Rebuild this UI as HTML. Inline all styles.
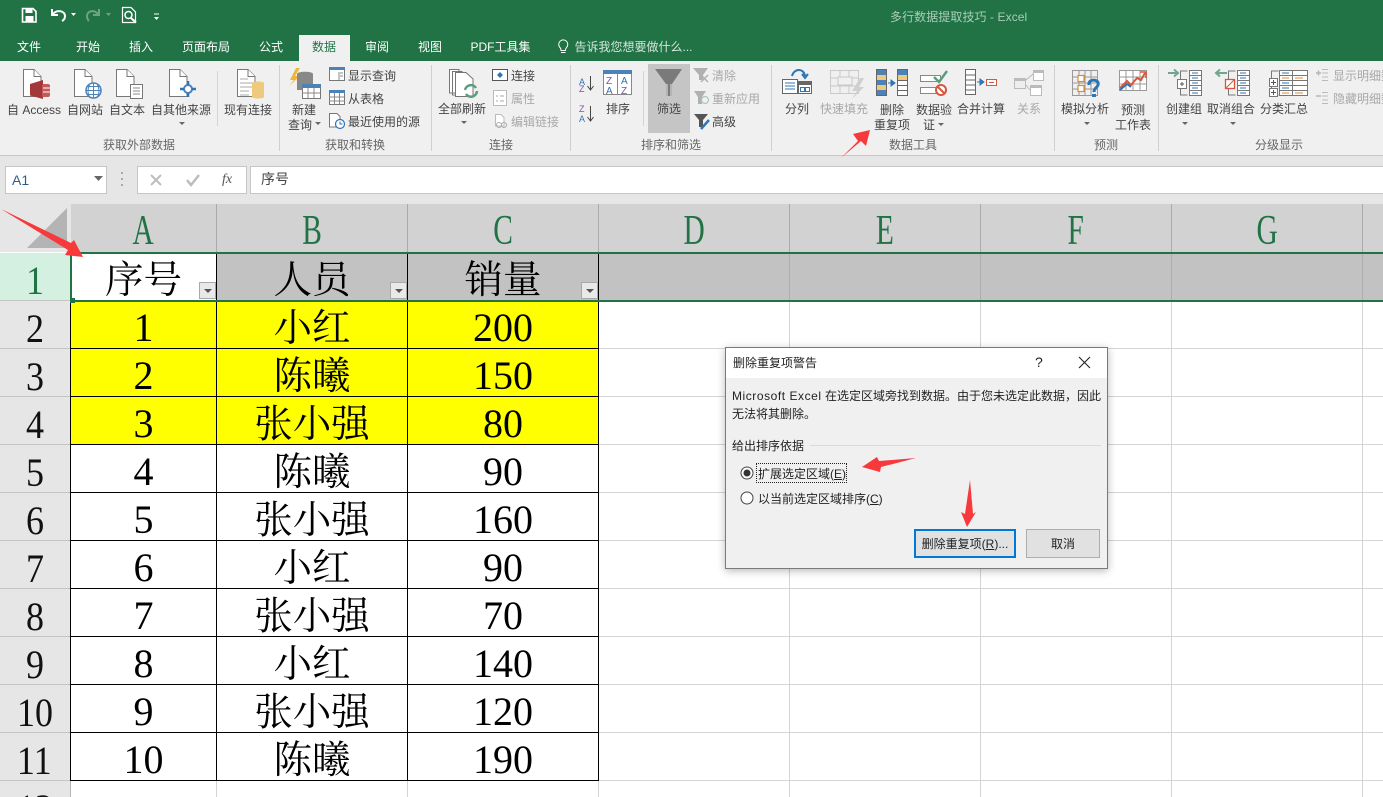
<!DOCTYPE html>
<html lang="zh"><head><meta charset="utf-8"><title>多行数据提取技巧 - Excel</title>
<style>
html,body{margin:0;padding:0;height:797px;overflow:hidden}
body{width:1383px;position:relative;background:#fff;font-family:"Liberation Sans","Noto Sans CJK SC",sans-serif;font-size:12px;color:#444}
div,span{position:absolute;white-space:nowrap}
.t{line-height:16px;height:16px;margin-top:1px}
.c{transform:translateX(-50%)}
.d{color:#a8a8a8}
.tab{top:39px;color:#fff;line-height:16px;transform:translateX(-50%)}
.sep{width:1px;background:#d4d4d4}
.ch{top:204px;height:48px;text-align:center;font:42px/54px "Liberation Serif",serif;color:#217346;background:#d2d2d2;border-right:1px solid #ababab;box-sizing:border-box;overflow:hidden}
.ch b{display:inline-block;font-weight:400;transform:scaleX(.7)}
.rh{left:0;width:71px;height:48px;background:#e6e6e6;border-bottom:1px solid #c4c4c4;box-sizing:border-box;text-align:center;font:40px/55px "Liberation Serif",serif;color:#111;overflow:hidden}
.rh b{display:inline-block;font-weight:400;transform:scaleX(.9);margin-right:2px}
.cell{height:48px;text-align:center;font:40px/56px "Liberation Serif","Noto Serif CJK SC",serif;color:#000;font-weight:400}
.z{font-size:38.500px;line-height:59px}
.h{position:absolute;background:#d4d4d4;height:1px;left:598px;right:0}
.v{position:absolute;background:#d4d4d4;width:1px;top:300px;bottom:0}
.bh{position:absolute;background:#000;height:1px;left:71px;width:528px}
.bv{position:absolute;background:#000;width:1px;top:253px;height:528px}
.fb{width:17px;height:17px;top:282px;box-sizing:border-box;border:1px solid #a9a9a9;background:#e9e9e9}
.fb:after{content:"";position:absolute;left:4px;top:6px;border:4px solid transparent;border-top:4px solid #555;border-bottom:0}
.dt{color:#222}
.la{position:static;letter-spacing:.55px}
</style></head><body>

<div style="left:0;top:0;width:1383px;height:61px;background:#217346"></div>
<div class="t" style="left:890px;top:8px;color:#a9cdb8;letter-spacing:.08px">多行数据提取技巧 - Excel</div>
<div style="left:299px;top:35px;width:51px;height:26px;background:#f0f0f0"></div>
<span class="tab" style="left:29px">文件</span>
<span class="tab" style="left:88px">开始</span>
<span class="tab" style="left:141px">插入</span>
<span class="tab" style="left:206px">页面布局</span>
<span class="tab" style="left:271px">公式</span>
<span class="tab" style="left:324px;color:#217346">数据</span>
<span class="tab" style="left:377px">审阅</span>
<span class="tab" style="left:430px">视图</span>
<span class="tab" style="left:500.500px">PDF工具集</span>
<span class="tab" style="left:633.500px;color:#d3e6da">告诉我您想要做什么...</span>

<div style="left:0;top:61px;width:1383px;height:94px;background:#f0f0f0;border-bottom:1px solid #c8c8c8"></div>
<div class="sep" style="left:217px;top:71px;height:55px"></div>
<div class="sep" style="left:279px;top:65px;height:86px;background:#cfcfcf"></div>
<div class="sep" style="left:431px;top:65px;height:86px;background:#cfcfcf"></div>
<div class="sep" style="left:570px;top:65px;height:86px;background:#cfcfcf"></div>
<div class="sep" style="left:643px;top:71px;height:55px"></div>
<div class="sep" style="left:771px;top:65px;height:86px;background:#cfcfcf"></div>
<div class="sep" style="left:1054px;top:65px;height:86px;background:#cfcfcf"></div>
<div class="sep" style="left:1158px;top:65px;height:86px;background:#cfcfcf"></div>
<div style="left:648px;top:64px;width:42px;height:69px;background:#c5c5c5"></div>

<span class="t c" style="left:34px;top:101px">自 Access</span>
<span class="t c" style="left:85px;top:101px">自网站</span>
<span class="t c" style="left:127px;top:101px">自文本</span>
<span class="t c" style="left:181px;top:101px">自其他来源</span>
<span class="t c" style="left:248px;top:101px">现有连接</span>
<span class="t c" style="left:304px;top:101px">新建</span>
<span class="t c" style="left:300px;top:116px">查询</span>
<span class="t" style="left:348px;top:67px">显示查询</span>
<span class="t" style="left:348px;top:90px">从表格</span>
<span class="t" style="left:348px;top:113px">最近使用的源</span>
<span class="t c" style="left:462px;top:100px">全部刷新</span>
<span class="t" style="left:511px;top:67px">连接</span>
<span class="t d" style="left:511px;top:90px">属性</span>
<span class="t d" style="left:511px;top:113px">编辑链接</span>
<span class="t c" style="left:618px;top:100px">排序</span>
<span class="t c" style="left:669px;top:100px">筛选</span>
<span class="t d" style="left:712px;top:67px">清除</span>
<span class="t d" style="left:712px;top:90px">重新应用</span>
<span class="t" style="left:712px;top:113px">高级</span>
<span class="t c" style="left:797px;top:100px">分列</span>
<span class="t c d" style="left:844px;top:100px">快速填充</span>
<span class="t c" style="left:892px;top:101px">删除</span>
<span class="t c" style="left:892px;top:116px">重复项</span>
<span class="t c" style="left:934px;top:101px">数据验</span>
<span class="t c" style="left:929px;top:116px">证</span>
<span class="t c" style="left:981px;top:100px">合并计算</span>
<span class="t c d" style="left:1029px;top:100px">关系</span>
<span class="t c" style="left:1085px;top:100px">模拟分析</span>
<span class="t c" style="left:1133px;top:101px">预测</span>
<span class="t c" style="left:1133px;top:116px">工作表</span>
<span class="t c" style="left:1184px;top:100px">创建组</span>
<span class="t c" style="left:1231px;top:100px">取消组合</span>
<span class="t c" style="left:1284px;top:100px">分类汇总</span>
<span class="t d" style="left:1333px;top:67px">显示明细数据</span>
<span class="t d" style="left:1333px;top:90px">隐藏明细数据</span>
<span class="t c" style="left:139px;top:136px;color:#666">获取外部数据</span>
<span class="t c" style="left:355px;top:136px;color:#666">获取和转换</span>
<span class="t c" style="left:501px;top:136px;color:#666">连接</span>
<span class="t c" style="left:671px;top:136px;color:#666">排序和筛选</span>
<span class="t c" style="left:913px;top:136px;color:#666">数据工具</span>
<span class="t c" style="left:1106px;top:136px;color:#666">预测</span>
<span class="t c" style="left:1279px;top:136px;color:#666">分级显示</span>

<!-- formula bar -->
<div style="left:0;top:156px;width:1383px;height:48px;background:#e6e6e6"></div>
<div style="left:5px;top:166px;width:102px;height:28px;background:#fff;border:1px solid #c6c6c6;box-sizing:border-box;font-size:14px;line-height:26px;padding-left:6px;color:#2f5d8a">A1</div>
<div style="left:137px;top:166px;width:110px;height:28px;background:#fff;border:1px solid #c6c6c6;box-sizing:border-box"></div>
<div style="left:250px;top:166px;width:1140px;height:28px;background:#fff;border:1px solid #c6c6c6;box-sizing:border-box;font-size:14px;line-height:25px;padding-left:10px;color:#444">序号</div>
<span style="left:222px;top:171px;font:italic 14px/18px 'Liberation Serif',serif;color:#555">fx</span>

<!-- sheet -->
<div style="left:0;top:204px;width:71px;height:48px;background:#e6e6e6"></div>
<div class="ch" style="left:71px;width:146px"><b>A</b></div>
<div class="ch" style="left:217px;width:191px"><b>B</b></div>
<div class="ch" style="left:408px;width:191px"><b>C</b></div>
<div class="ch" style="left:599px;width:191px"><b>D</b></div>
<div class="ch" style="left:790px;width:191px"><b>E</b></div>
<div class="ch" style="left:981px;width:191px"><b>F</b></div>
<div class="ch" style="left:1172px;width:191px"><b>G</b></div>
<div class="ch" style="left:1363px;width:20px;border:0"></div>

<div class="rh" style="top:253px;background:#d3f0e0;color:#217346"><b>1</b></div>
<div class="rh" style="top:301px"><b>2</b></div>
<div class="rh" style="top:349px"><b>3</b></div>
<div class="rh" style="top:397px"><b>4</b></div>
<div class="rh" style="top:445px"><b>5</b></div>
<div class="rh" style="top:493px"><b>6</b></div>
<div class="rh" style="top:541px"><b>7</b></div>
<div class="rh" style="top:589px"><b>8</b></div>
<div class="rh" style="top:637px"><b>9</b></div>
<div class="rh" style="top:685px"><b>10</b></div>
<div class="rh" style="top:733px"><b>11</b></div>
<div class="rh" style="top:781px;height:16px;border:0"><b>12</b></div>
<div style="left:70px;top:253px;width:1px;height:544px;background:#b5b5b5"></div>

<div style="left:217px;top:253px;width:1166px;height:47px;background:#c2c2c2"></div>
<div style="left:71px;top:301px;width:527px;height:143px;background:#ff0"></div>

<div class="h" style="top:348px"></div><div class="h" style="top:396px"></div><div class="h" style="top:444px"></div><div class="h" style="top:492px"></div><div class="h" style="top:540px"></div><div class="h" style="top:588px"></div><div class="h" style="top:636px"></div><div class="h" style="top:684px"></div><div class="h" style="top:732px"></div><div class="h" style="top:780px"></div>
<div class="v" style="left:789px"></div><div class="v" style="left:980px"></div><div class="v" style="left:1171px"></div><div class="v" style="left:1362px"></div>
<div class="v" style="left:216px;top:781px"></div><div class="v" style="left:407px;top:781px"></div><div class="v" style="left:598px;top:781px"></div>
<div style="left:789px;top:253px;width:1px;height:47px;background:#aeaeae"></div><div style="left:980px;top:253px;width:1px;height:47px;background:#aeaeae"></div><div style="left:1171px;top:253px;width:1px;height:47px;background:#aeaeae"></div><div style="left:1362px;top:253px;width:1px;height:47px;background:#aeaeae"></div>

<div class="bh" style="top:348px"></div><div class="bh" style="top:396px"></div><div class="bh" style="top:444px"></div><div class="bh" style="top:492px"></div><div class="bh" style="top:540px"></div><div class="bh" style="top:588px"></div><div class="bh" style="top:636px"></div><div class="bh" style="top:684px"></div><div class="bh" style="top:732px"></div><div class="bh" style="top:780px"></div>
<div class="bv" style="left:216px"></div><div class="bv" style="left:407px"></div><div class="bv" style="left:598px"></div>
<div class="bv" style="left:70px;top:301px;height:480px"></div>

<div class="cell z" style="left:71px;top:252px;width:145px">序号</div><div class="cell z" style="left:217px;top:252px;width:190px">人员</div><div class="cell z" style="left:408px;top:252px;width:190px">销量</div>
<div class="cell" style="left:71px;top:300px;width:145px">1</div><div class="cell z" style="left:217px;top:300px;width:190px">小红</div><div class="cell" style="left:408px;top:300px;width:190px">200</div>
<div class="cell" style="left:71px;top:348px;width:145px">2</div><div class="cell z" style="left:217px;top:348px;width:190px">陈曦</div><div class="cell" style="left:408px;top:348px;width:190px">150</div>
<div class="cell" style="left:71px;top:396px;width:145px">3</div><div class="cell z" style="left:217px;top:396px;width:190px">张小强</div><div class="cell" style="left:408px;top:396px;width:190px">80</div>
<div class="cell" style="left:71px;top:444px;width:145px">4</div><div class="cell z" style="left:217px;top:444px;width:190px">陈曦</div><div class="cell" style="left:408px;top:444px;width:190px">90</div>
<div class="cell" style="left:71px;top:492px;width:145px">5</div><div class="cell z" style="left:217px;top:492px;width:190px">张小强</div><div class="cell" style="left:408px;top:492px;width:190px">160</div>
<div class="cell" style="left:71px;top:540px;width:145px">6</div><div class="cell z" style="left:217px;top:540px;width:190px">小红</div><div class="cell" style="left:408px;top:540px;width:190px">90</div>
<div class="cell" style="left:71px;top:588px;width:145px">7</div><div class="cell z" style="left:217px;top:588px;width:190px">张小强</div><div class="cell" style="left:408px;top:588px;width:190px">70</div>
<div class="cell" style="left:71px;top:636px;width:145px">8</div><div class="cell z" style="left:217px;top:636px;width:190px">小红</div><div class="cell" style="left:408px;top:636px;width:190px">140</div>
<div class="cell" style="left:71px;top:684px;width:145px">9</div><div class="cell z" style="left:217px;top:684px;width:190px">张小强</div><div class="cell" style="left:408px;top:684px;width:190px">120</div>
<div class="cell" style="left:71px;top:732px;width:145px">10</div><div class="cell z" style="left:217px;top:732px;width:190px">陈曦</div><div class="cell" style="left:408px;top:732px;width:190px">190</div>

<div class="fb" style="left:199px"></div><div class="fb" style="left:390px"></div><div class="fb" style="left:581px"></div>

<!-- selection -->
<div style="left:70px;top:252px;width:1313px;height:2px;background:#217346"></div>
<div style="left:70px;top:300px;width:1313px;height:2px;background:#217346"></div>
<div style="left:70px;top:252px;width:2px;height:50px;background:#217346"></div>
<div style="left:70px;top:298px;width:5px;height:5px;background:#217346"></div>

<!-- dialog -->
<div style="left:725px;top:347px;width:383px;height:222px;background:#f0f0f0;border:1px solid #7a7a7a;box-sizing:border-box;box-shadow:0 2px 8px rgba(0,0,0,.28)"></div>
<div style="left:726px;top:348px;width:381px;height:30px;background:#fff"></div>
<span class="t dt" style="left:733px;top:354px">删除重复项警告</span>
<span style="left:1035px;top:354px;font-size:14px;line-height:16px;color:#222">?</span>
<span class="t dt" style="left:732px;top:387px"><span class="la">Microsoft Excel</span> 在选定区域旁找到数据。由于您未选定此数据，因此</span>
<span class="t dt" style="left:732px;top:405px">无法将其删除。</span>
<span class="t dt" style="left:732px;top:437px">给出排序依据</span>
<div style="left:810px;top:445px;width:291px;height:1px;background:#d9d9d9"></div>
<div style="left:756px;top:463px;width:91px;height:20px;box-sizing:border-box;border:1px dotted #222"></div>
<span class="t dt" style="left:758px;top:465px">扩展选定区域(<u>E</u>)</span>
<span class="t dt" style="left:758px;top:490px">以当前选定区域排序(<u>C</u>)</span>
<div style="left:914px;top:529px;width:102px;height:29px;box-sizing:border-box;border:2px solid #0078d7;background:#e1e1e1;text-align:center;line-height:26px;color:#222">删除重复项(<u>R</u>)...</div>
<div style="left:1026px;top:529px;width:74px;height:29px;box-sizing:border-box;border:1px solid #adadad;background:#e1e1e1;text-align:center;line-height:28px;color:#222">取消</div>

<svg width="1383" height="797" viewBox="0 0 1383 797" style="position:absolute;left:0;top:0" fill="none">
<defs>
<path id="pg" d="M.5.5H11L18 7.5V27.5H.5Z" fill="#fff" stroke="#777"/>
<path id="pf" d="M11 .5V7.5H18" stroke="#777" fill="#fff"/>
</defs>
<!-- QAT -->
<path d="M22.5 8.5H33L36 11.5V22H22.5Z" stroke="#fff" stroke-width="1.6"/><rect x="25.5" y="9" width="7" height="4" fill="#fff"/><rect x="25.5" y="16" width="8" height="5.5" fill="#fff"/>
<path d="M52 9V15H58M53 14C57 9 65 11 65 16C65 18 64 20 62 21" stroke="#fff" stroke-width="2"/>
<path d="M71 13H76L73.500 16Z" fill="#fff"/>
<path d="M99 9V15H93M98 14C94 9 87 11 87 16C87 18 88 20 89 21" stroke="#6fa386" stroke-width="2"/>
<path d="M106 13H111L108.500 16Z" fill="#6fa386"/>
<path d="M122.500 7.500H131L135.500 12V22.500H122.500Z" stroke="#fff" stroke-width="1.2"/><circle cx="128.500" cy="15" r="3.500" stroke="#fff" stroke-width="1.500"/><path d="M131 18L136 22.500" stroke="#fff" stroke-width="2"/>
<path d="M154 14H159" stroke="#fff"/><path d="M154 17H159L156.500 20Z" fill="#fff"/>
<!-- bulb -->
<path d="M560 47.500A4.500 4.500 0 1 1 566.500 47.500C565.500 48.500 565.500 49.500 565.500 50.500H561C561 49.500 561 48.500 560 47.500ZM561 52.500H565.500" stroke="#fff"/>

<!-- Access -->
<use href="#pg" x="23" y="69"/><use href="#pf" x="23" y="69"/>
<path d="M30 84L43 80V99L30 95.500Z" fill="#a4373a"/><rect x="42" y="84" width="8" height="13" rx="2" fill="#c45a5a"/><path d="M43 88H50M43 92H50" stroke="#fff"/>
<!-- web -->
<use href="#pg" x="74" y="69"/><use href="#pf" x="74" y="69"/>
<circle cx="93.500" cy="90.500" r="7.500" fill="#fff" stroke="#4d82b8" stroke-width="1.500"/><path d="M86 90.500H101M87 86.500H100M87 94.500H100M93.500 83V98M89.500 85C87.500 89 87.500 93 89.500 97M97.500 85C99.500 89 99.500 93 97.500 97" stroke="#4d82b8"/>
<!-- text -->
<use href="#pg" x="116" y="69"/><use href="#pf" x="116" y="69"/>
<rect x="130.500" y="84.500" width="12" height="14" fill="#fff" stroke="#777"/><path d="M133 88H140M133 91H140M133 94H140" stroke="#888"/>
<!-- other -->
<use href="#pg" x="169" y="69"/><use href="#pf" x="169" y="69"/>
<circle cx="188" cy="89" r="4" stroke="#4d82b8" stroke-width="2" fill="#fff"/><path d="M188 81V85M188 93V97M180 89H184M192 89H196" stroke="#2e75b6" stroke-width="2.500"/>
<path d="M179 122H185L182 125Z" fill="#666"/>
<!-- existing -->
<use href="#pg" x="237" y="69"/><use href="#pf" x="237" y="69"/>
<path d="M240 79H248M240 83H252M240 87H252M240 91H249M240 95H249" stroke="#aaa"/>
<path d="M252 83C252 81 264 81 264 83V97C264 99 252 99 252 97Z" fill="#eec97e"/>
<!-- new query -->
<path d="M296 68L290 80H294L289 86L300 76H295L300 68Z" fill="#f0b43c"/>
<path d="M297 74C297 71 313 71 313 74V90H297Z" fill="#888"/>
<rect x="302.500" y="84.500" width="18" height="14" fill="#fff" stroke="#777"/><rect x="302" y="84" width="19" height="4" fill="#4d82b8"/><path d="M302 93H320M308 88V98M314 88V98" stroke="#888"/>
<path d="M315 122H321L318 125Z" fill="#666"/>
<rect x="329.500" y="67.500" width="15" height="13" fill="#fff" stroke="#777"/><rect x="329" y="67" width="16" height="3" fill="#4d82b8"/><path d="M339 72V80M340 73H343M340 76H343" stroke="#888"/>
<rect x="329.500" y="90.500" width="15" height="14" fill="#fff" stroke="#777"/><rect x="329" y="90" width="16" height="3" fill="#4d82b8"/><path d="M329 97H344M329 101H344M334.500 93V104M339.500 93V104" stroke="#888"/>
<path d="M329.500 113.500H337L340 116.500V127H329.500Z" fill="#fff" stroke="#777"/><circle cx="340" cy="124" r="4.500" fill="#fff" stroke="#2e75b6" stroke-width="1.200"/><path d="M340 121.500V124H342.500" stroke="#2e75b6"/>
<!-- refresh all -->
<path d="M449.500 69.500H459V93H449.500ZM452.500 71.500H462V95H452.500Z" stroke="#777" fill="#fff"/>
<path d="M455.500 72.500H466L473 79V96.500H455.500Z" fill="#fff" stroke="#777"/>
<path d="M465 90A6 6 0 0 1 476 88M477 91A6 6 0 0 1 466 94" stroke="#5a9e7c" stroke-width="2.500"/>
<path d="M461 121H467L464 124Z" fill="#666"/>
<!-- connections -->
<rect x="492.500" y="69.500" width="15" height="11" fill="#fff" stroke="#555"/><path d="M500 72L503 75L500 78L497 75Z" fill="#2e75b6"/>
<rect x="493.500" y="90.500" width="13" height="15" fill="#fff" stroke="#bbb"/><path d="M496 96H498M500 96H504M496 101H498M500 101H504" stroke="#aaa"/>
<path d="M495.500 114.500H501L504 117.500V126H495.500Z" fill="#fff" stroke="#bbb"/><circle cx="499" cy="125" r="2.500" stroke="#aaa"/><circle cx="504" cy="125" r="2.500" stroke="#aaa"/>
<!-- sort -->
<text x="579" y="85" font-size="9" fill="#2e75b6" font-family="Liberation Sans">A</text><text x="579" y="92" font-size="9" fill="#7f4fa8" font-family="Liberation Sans">Z</text>
<path d="M590.500 76V89M587.500 86L590.500 90L593.500 86" stroke="#444"/>
<text x="579" y="112" font-size="9" fill="#7f4fa8" font-family="Liberation Sans">Z</text><text x="579" y="122" font-size="9" fill="#2e75b6" font-family="Liberation Sans">A</text>
<path d="M590.500 106V120M587.500 117L590.500 121L593.500 117" stroke="#444"/>
<rect x="603.500" y="70.500" width="28" height="24" fill="#fff" stroke="#888"/><rect x="603" y="70" width="29" height="4" fill="#4d82b8"/><path d="M617.500 74V94" stroke="#888"/>
<text x="606" y="84" font-size="10" fill="#7f4fa8" font-family="Liberation Sans">Z</text><text x="606" y="94" font-size="10" fill="#2e75b6" font-family="Liberation Sans">A</text>
<text x="621" y="84" font-size="10" fill="#2e75b6" font-family="Liberation Sans">A</text><text x="621" y="94" font-size="10" fill="#7f4fa8" font-family="Liberation Sans">Z</text>
<!-- filter -->
<path d="M655 69H682L672 84V96H666V84Z" fill="#7a7a7a"/><path d="M667 84V96M671 84V96" stroke="#eee"/>
<path d="M693 68H708L703 75V80H699V75Z" fill="#b0b0b0"/><path d="M701 75L708 82M708 75L701 82" stroke="#b0b0b0" stroke-width="1.500"/>
<path d="M694 91H706L702 97V104H698V97Z" fill="#b0b0b0"/><circle cx="705" cy="100" r="3.500" stroke="#a9c9b9" stroke-width="1.200"/>
<path d="M694 114H708L703 120V127H699V120Z" fill="#555"/><path d="M701 129L709 120" stroke="#2e75b6" stroke-width="2.500"/>
<!-- text to columns -->
<rect x="782.500" y="79.500" width="15" height="14" fill="#fff" stroke="#666"/><path d="M785 83H795M785 86H795M785 89H795" stroke="#2e75b6"/>
<rect x="798.500" y="81.500" width="13" height="12" fill="#fff" stroke="#666"/><rect x="798" y="81" width="14" height="4" fill="#666"/><rect x="800.500" y="87.500" width="4" height="4" stroke="#2e75b6"/><rect x="805.500" y="87.500" width="4" height="4" stroke="#2e75b6"/>
<path d="M792 76C794 68 804 68 805 76M802 74L805 78L808 74" stroke="#2e75b6" stroke-width="2"/>
<!-- flash fill -->
<path d="M830.500 70.500H858.500V93.500H830.500ZM830.500 78H858.500M830.500 86H858.500M840 70.500V93.500M849 70.500V93.500" stroke="#c9c9c9"/><rect x="838" y="77" width="14" height="8" fill="#f0f0f0" stroke="#c9c9c9"/>
<path d="M860 78L852 91H857L852 99L864 87H859L864 78Z" fill="#cfcfcf"/>
<!-- remove duplicates -->
<rect x="876.500" y="69.500" width="10" height="26" fill="#4d82b8" stroke="#666"/><rect x="877" y="75" width="9" height="5" fill="#eec97e"/><rect x="877" y="85" width="9" height="5" fill="#eec97e"/>
<rect x="897.500" y="69.500" width="10" height="26" fill="#fff" stroke="#666"/><rect x="898" y="70" width="9" height="5" fill="#4d82b8"/><rect x="898" y="75" width="9" height="5" fill="#eec97e"/><path d="M897 80.500H908M897 85.500H908M897 90.500H908" stroke="#666"/>
<path d="M888 83H893M891 80L895 83L891 86Z" stroke="#2e75b6" fill="#2e75b6"/>
<!-- validation -->
<rect x="920.500" y="75.500" width="20" height="6" fill="#fff" stroke="#888"/><rect x="920.500" y="87.500" width="20" height="6" fill="#fff" stroke="#888"/>
<path d="M934 77L939 82L947 71" stroke="#5a9e7c" stroke-width="2.500"/>
<circle cx="941" cy="90" r="5" fill="#fff" stroke="#d9553b" stroke-width="2"/><path d="M937.500 86.500L944.500 93.500" stroke="#d9553b" stroke-width="2"/>
<path d="M938 123H944L941 126Z" fill="#666"/>
<!-- consolidate -->
<rect x="965.500" y="69.500" width="10" height="25" fill="#fff" stroke="#666"/><path d="M965 75H976M965 80H976M965 85H976M965 90H976" stroke="#666"/>
<path d="M977 82H982M980 79L984 82L980 85Z" stroke="#2e75b6" fill="#2e75b6"/>
<rect x="986.500" y="79.500" width="10" height="6" fill="#fff" stroke="#d9553b"/><path d="M989 82.500H994" stroke="#d9553b"/>
<!-- relationships -->
<rect x="1014.500" y="78.500" width="11" height="10" fill="#eee" stroke="#bbb"/><rect x="1014" y="78" width="12" height="3" fill="#bbb"/>
<rect x="1033.500" y="70.500" width="10" height="10" fill="#fff" stroke="#bbb"/><rect x="1033" y="70" width="11" height="3" fill="#bbb"/>
<rect x="1030.500" y="85.500" width="11" height="10" fill="#fff" stroke="#bbb"/><rect x="1030" y="85" width="12" height="3" fill="#bbb"/>
<path d="M1026 80L1033 74M1026 85L1030 90" stroke="#bbb"/>
<!-- what-if -->
<path d="M1072.500 70.500H1097.500V95.500H1072.500ZM1072.500 77H1097.500M1072.500 83H1097.500M1072.500 89H1097.500M1079 70.500V95.500M1085 70.500V95.500M1091 70.500V95.500" stroke="#999"/>
<rect x="1078" y="75.500" width="6" height="6" fill="#fff" stroke="#e08a2e" stroke-width="1.200"/><rect x="1078" y="85.500" width="6" height="6" fill="#fff" stroke="#e08a2e" stroke-width="1.200"/>
<path d="M1089 85C1088 78 1100 79 1098 85C1097 88 1094 88 1094 92" stroke="#2e75b6" stroke-width="3"/><rect x="1092" y="94" width="4" height="3" fill="#2e75b6"/>
<!-- forecast -->
<path d="M1119.500 70.500H1146.500V90.500H1119.500ZM1119.500 77H1146.500M1119.500 84H1146.500M1126 70.500V90.500M1133 70.500V90.500M1140 70.500V90.500" stroke="#999" fill="#fff"/>
<path d="M1120 88L1127 81L1131 85L1137 78L1141 80L1145 73" stroke="#d9553b" stroke-width="2"/><path d="M1140 72H1146V78" stroke="#d9553b" stroke-width="1.500"/><path d="M1120 90L1127 84L1131 87" stroke="#2e75b6" stroke-width="2"/>
<!-- group -->
<path d="M1168 73H1177M1174 69.500L1178 73L1174 76.500" stroke="#70a58e" stroke-width="2"/>
<path d="M1187.500 71H1180.500V95H1187.500" stroke="#777"/>
<rect x="1177.500" y="79.500" width="9" height="9" fill="#fff" stroke="#777"/><path d="M1180 84H1184M1182 82V86" stroke="#555"/>
<rect x="1189.500" y="70.500" width="12" height="25" fill="#fff" stroke="#777"/><path d="M1189 75.500H1202M1189 80.500H1202M1189 85.500H1202M1189 90.500H1202" stroke="#777"/><path d="M1192 73H1198M1192 78H1198M1192 83H1198M1192 88H1198M1192 93H1198" stroke="#2e75b6"/>
<path d="M1227 73H1217M1220 69.500L1216 73L1220 76.500" stroke="#70a58e" stroke-width="2"/>
<path d="M1235.500 71H1228.500V95H1235.500" stroke="#777"/>
<rect x="1225.500" y="79.500" width="9" height="9" fill="#fff" stroke="#d9553b" stroke-width="1.300"/><path d="M1226 88L1234 80" stroke="#d9553b"/>
<rect x="1237.500" y="70.500" width="12" height="25" fill="#fff" stroke="#777"/><path d="M1237 75.500H1250M1237 80.500H1250M1237 85.500H1250M1237 90.500H1250" stroke="#777"/><path d="M1240 73H1246M1240 78H1246M1240 83H1246M1240 88H1246M1240 93H1246" stroke="#2e75b6"/>
<path d="M1278.500 71H1271.500V95H1278.500" stroke="#777"/>
<rect x="1269.500" y="78.500" width="8" height="8" fill="#fff" stroke="#777"/><rect x="1269.500" y="88.500" width="8" height="8" fill="#fff" stroke="#777"/><path d="M1271 82.500H1276M1273.500 80V85M1271 92.500H1276M1273.500 90V95" stroke="#555"/>
<rect x="1279.500" y="70.500" width="28" height="25" fill="#fff" stroke="#777"/><path d="M1279 75.500H1308M1279 80.500H1308M1279 85.500H1308M1279 90.500H1308M1292.500 70V96" stroke="#777"/>
<path d="M1282 73H1289M1282 83H1289M1282 88H1289" stroke="#2e75b6"/><path d="M1282 78H1289M1295 78H1303M1282 93H1289M1295 93H1303" stroke="#e08a2e"/>
<path d="M1316 73H1321M1318.500 70.500V75.500" stroke="#b5b5b5" stroke-width="1.500"/><path d="M1322 69.500H1328M1322 73H1328M1322 77H1328M1322 80.500H1328" stroke="#bbb"/>
<path d="M1316 96H1321" stroke="#b5b5b5" stroke-width="1.500"/><path d="M1322 92.500H1328M1322 96H1328M1322 100H1328M1322 103.500H1328" stroke="#bbb"/>
<!-- dropdowns -->
<path d="M1084 122H1090L1087 125Z" fill="#666"/><path d="M1182 122H1188L1185 125Z" fill="#666"/><path d="M1230 122H1236L1233 125Z" fill="#666"/>
<!-- formula bar -->
<path d="M94 176H103L98.500 181Z" fill="#666"/>
<path d="M122 172V174M122 178V180M122 184V186" stroke="#aaa" stroke-width="2"/>
<path d="M151 175L161 185M161 175L151 185" stroke="#bdbdbd" stroke-width="2"/>
<path d="M187 180L191 185L199 175" stroke="#bdbdbd" stroke-width="2.500"/>
<!-- corner -->
<path d="M27 248L67 208V248Z" fill="#b4b4b4"/>
<!-- dialog icons -->
<path d="M1079 357L1090 368M1090 357L1079 368" stroke="#222" stroke-width="1.100"/>
<circle cx="747" cy="473" r="6" fill="#fff" stroke="#444"/><circle cx="747" cy="473" r="3.500" fill="#333"/>
<circle cx="747" cy="498" r="6" fill="#fff" stroke="#444"/>
<!-- red arrows -->
<path d="M1 209L71 243L74 240L83 257L65 255L68 250Z" fill="#f7393c"/>
<path d="M841 158L858 141L853 134L870 130L866 146L861 141Z" fill="#f7393c"/>
<path d="M862 467L877 457L879 461L916 458L881 467L880 472Z" fill="#f7393c"/>
<path d="M970 480L973 514L976 512L967 527L961 512L965 514Z" fill="#f7393c"/>
</svg>
</body></html>
